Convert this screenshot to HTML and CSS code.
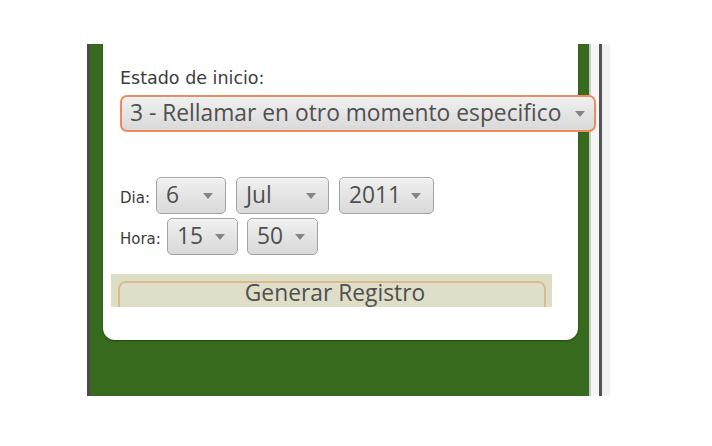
FILE: index.html
```html
<!DOCTYPE html>
<html lang="es">
<head>
<meta charset="utf-8">
<title>Registro</title>
<link rel="stylesheet" href="styles.css">
</head>
<body>
<div class="frame">
  <div class="edge-dark"></div>
  <div class="green">
    <div class="card">
      <div class="lbl">Estado de inicio:</div>
      <div class="combo combo-wide"><span class="val">3 - Rellamar en otro momento especifico</span><i class="arrow"></i></div>
      <div class="row row-dia">
        <span class="rlbl">Dia:</span>
        <div class="combo c-day"><span class="val">6</span><i class="arrow"></i></div>
        <div class="combo c-month"><span class="val">Jul</span><i class="arrow"></i></div>
        <div class="combo c-year"><span class="val">2011</span><i class="arrow"></i></div>
      </div>
      <div class="row row-hora">
        <span class="rlbl">Hora:</span>
        <div class="combo c-hour"><span class="val">15</span><i class="arrow"></i></div>
        <div class="combo c-min"><span class="val">50</span><i class="arrow"></i></div>
      </div>
      <div class="btn-strip">
        <div class="btn">Generar Registro</div>
      </div>
    </div>
  </div>
  <div class="edge-light"></div>
  <div class="gap"></div>
  <div class="edge-dark2"></div>
  <div class="edge-light2"></div>
</div>
</body>
</html>
```
FILE: styles.css
```css
html, body {
  margin: 0;
  padding: 0;
  background: #ffffff;
}
body {
  font-family: "DejaVu Sans", sans-serif;
}
.frame {
  margin: 44px 0 0 87px;
  height: 352px;
  display: flex;
  overflow: hidden;
}
.edge-dark {
  width: 3px;
  background: #4a4a4a;
}
.green {
  width: 499px;
  background: #386a1d;
  padding: 0 11px 0 13px;
  box-sizing: border-box;
  position: relative;
  z-index: 1;
}
.card {
  background: #ffffff;
  height: 296px;
  border-radius: 0 0 12px 12px;
  box-shadow: 0 1px 2px rgba(0, 0, 0, 0.35);
  padding: 24px 0 0 17px;
  box-sizing: border-box;
}
.lbl {
  font-family: "DejaVu Sans", sans-serif;
  font-size: 17.5px;
  line-height: 20px;
  color: #3c3c3c;
}
.combo {
  display: flex;
  align-items: center;
  justify-content: space-between;
  box-sizing: border-box;
  height: 37px;
  border: 1px solid #a2a2a2;
  border-radius: 5px;
  background: linear-gradient(#f0f0f0, #d9d9d9);
  padding: 0 12px 0 9px;
  font-family: "Open Sans", sans-serif;
  font-size: 22.8px;
  color: #505050;
  box-shadow: inset 0 1px 0 rgba(255, 255, 255, 0.7);
}
.val {
  white-space: nowrap;
  line-height: 1;
}
.arrow {
  width: 0;
  height: 0;
  border-left: 5px solid transparent;
  border-right: 5px solid transparent;
  border-top: 6px solid #858585;
}
.combo-wide {
  width: 476px;
  margin-top: 7px;
  border: 2px solid #ee8a5c;
  border-radius: 7px;
  padding: 0 9px 0 8px;
}
.row {
  display: flex;
  align-items: baseline;
}
.row-dia {
  margin-top: 45px;
}
.row-hora {
  margin-top: 4px;
}
.rlbl {
  font-family: "DejaVu Sans", sans-serif;
  font-size: 15px;
  color: #3c3c3c;
  margin-right: 6px;
}
.c-day { width: 70px; }
.c-month { width: 93px; margin-left: 10px; }
.c-year { width: 95px; margin-left: 10px; }
.c-hour { width: 71px; }
.c-min { width: 71px; margin-left: 9px; }
.btn-strip {
  margin: 19px 0 0 -9px;
  width: 441px;
  height: 33px;
  overflow: hidden;
  background: #dedec7;
  padding: 7px 6px 0 7px;
  box-sizing: border-box;
}
.btn {
  height: 40px;
  border: 2px solid #dbbb8c;
  border-bottom: none;
  border-radius: 8px 8px 0 0;
  background: #dfdec8;
  text-align: center;
  padding-left: 6px;
  font-family: "Open Sans", sans-serif;
  font-size: 22.8px;
  line-height: 20px;
  color: #505050;
}
.edge-light {
  width: 2px;
  background: #c9c9c9;
}
.gap {
  width: 8px;
  background: #f6f6f6;
}
.edge-dark2 {
  width: 3px;
  background: #545454;
}
.edge-light2 {
  width: 8px;
  background: #f2f2f2;
}
```
